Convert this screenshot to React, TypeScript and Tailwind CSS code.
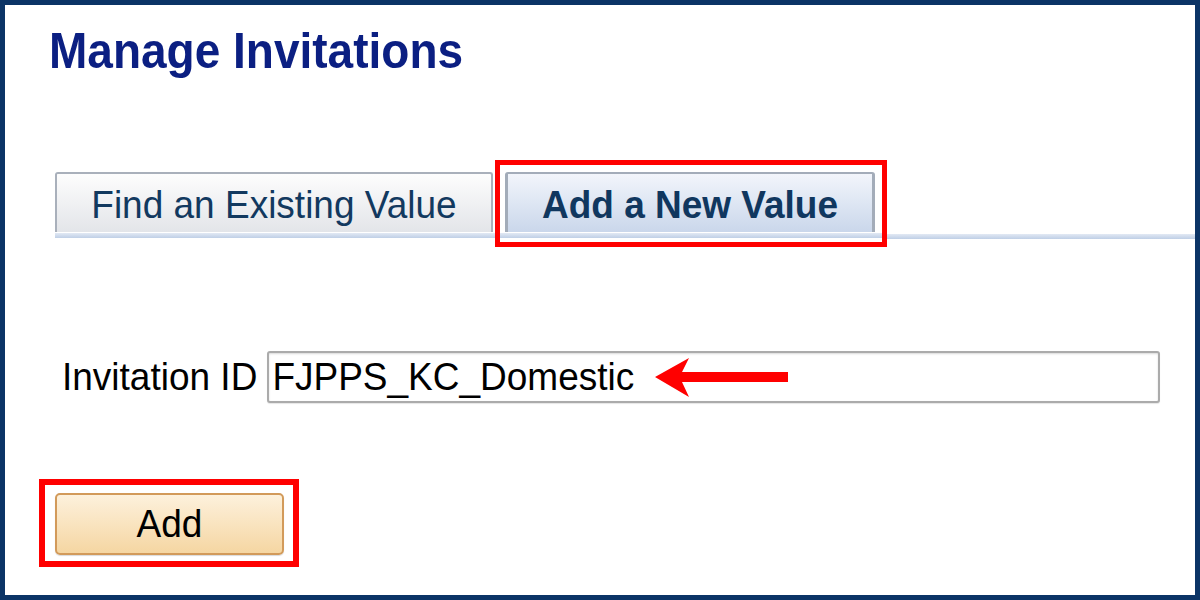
import React from "react"

// the reference text is a touch taller than Arial's proportions
const stretch = "inline-block scale-y-[1.06] origin-[50%_31px]"

function Tab({ label, active }: { label: string; active?: boolean }) {
  if (active) {
    return (
      <div className="w-[370px] h-[60px] border-t-2 border-x-[3px] border-[#a3acb9] rounded-t-[3px] bg-gradient-to-b from-[#f2f5fb] to-[#cad7eb] pt-[13px] text-center text-[37px] leading-none font-bold text-[#10375f]">
        <span className={stretch}>{label}</span>
      </div>
    )
  }
  return (
    <div className="w-[438px] h-[60px] border-t-2 border-x-2 border-[#a9b0bb] rounded-t-[3px] bg-gradient-to-b from-[#fdfdfd] to-[#e3e5e9] pt-[13px] text-center text-[37px] leading-none text-[#12395f]">
      <span className={stretch}>{label}</span>
    </div>
  )
}

function TabLine() {
  return <div className="h-[5px] mt-[1px] bg-gradient-to-b from-[#e2e9f4] to-[#bfcfe6]" />
}

export default function App() {
  return (
    <div className="w-[1200px] h-[600px] border-[5px] border-[#0b3466] bg-white overflow-hidden font-['Liberation_Sans',Arial,sans-serif]">
      <h1 className="ml-[44px] mt-[24px] text-[46px] leading-none font-bold text-[#0b1f82] scale-y-[1.09] origin-[0_39px]">
        Manage Invitations
      </h1>

      {/* tabs */}
      <div className="flex items-start ml-[50px] mt-[85px]">
        <div className="w-[440px] mt-[12px]">
          <Tab label="Find an Existing Value" />
          <TabLine />
        </div>
        <div className="w-[392px] h-[87px] border-[5px] border-[#ff0000]">
          <div className="pt-[7px] pl-[5px]">
            <Tab label="Add a New Value" active />
          </div>
          <TabLine />
        </div>
        <div className="flex-1 mt-[73px]">
          <TabLine />
        </div>
      </div>

      {/* invitation id */}
      <div className="flex items-center gap-[10px] ml-[57px] mt-[104px]">
        <span className={`text-[37px] leading-none text-black ${stretch}`}>Invitation ID</span>
        <div className="relative w-[893px] h-[52px] flex items-center border-2 border-[#ababab] rounded-[3px] bg-white pl-[3px] shadow-[inset_0_1px_2px_rgba(0,0,0,0.15),0_1px_1px_rgba(0,0,0,0.1)]">
          <span className={`text-[37px] leading-none text-black ${stretch}`}>FJPPS_KC_Domestic</span>
          <svg
            className="absolute left-[380px] top-[2px]"
            width="145"
            height="45"
            viewBox="0 0 145 45"
          >
            <polygon points="6,22 40,3 33,17 139,17 139,27 33,27 40,42" fill="#ff0000" />
          </svg>
        </div>
      </div>

      {/* add button */}
      <div className="ml-[34px] mt-[76px] w-[260px] h-[88px] border-[6px] border-[#ff0000] pt-[8px] pl-[10px]">
        <button className="w-[229px] h-[62px] rounded-[5px] border-2 border-[#d29a5a] bg-gradient-to-b from-[#fdf1dc] to-[#f5d6a2] text-[37px] leading-none text-black text-center shadow-[0_1px_1px_rgba(0,0,0,0.15)]">
          <span className={stretch}>Add</span>
        </button>
      </div>
    </div>
  )
}
